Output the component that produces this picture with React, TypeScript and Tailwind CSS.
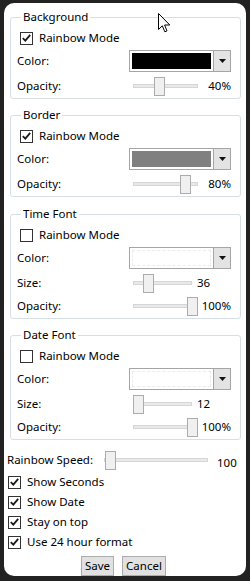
import React from 'react';

type SliderProps = { width: number; thumbLeft: number; className?: string };

const Slider: React.FC<SliderProps> = ({ width, thumbLeft, className = '' }) => (
  <div className={`relative h-[19px] shrink-0 ${className}`} style={{ width }}>
    <div className="absolute left-0 right-0 top-[7px] h-[4px] bg-[#e7eaea] border border-[#d6d6d6]" />
    <div
      className="absolute top-0 w-[11px] h-[19px] bg-[#f0f0f0] border border-[#acacac]"
      style={{ left: thumbLeft }}
    />
  </div>
);

const CheckBox: React.FC<{ checked: boolean; label: string }> = ({ checked, label }) => (
  <div className="flex items-center h-[20px]">
    <div className="w-[13px] h-[13px] border border-[#333333] bg-white flex items-center justify-center shrink-0">
      {checked && (
        <svg width="9" height="8" viewBox="0 0 9 8">
          <path d="M0.8 4.2 L3.3 6.6 L8.2 0.9" fill="none" stroke="#1a1a1a" strokeWidth="1.8" />
        </svg>
      )}
    </div>
    <span className="ml-[6px]">{label}</span>
  </div>
);

const ColorPicker: React.FC<{ color?: string }> = ({ color }) => (
  <div className="flex w-[102px] h-[22px] border border-[#a5a5a5] bg-white">
    <div className="flex-1 p-[2px]">
      <div
        className={`w-full h-full ${color ? '' : 'border border-dashed border-[#ececec]'}`}
        style={color ? { backgroundColor: color } : undefined}
      />
    </div>
    <div className="w-[17px] border-l border-[#a5a5a5] bg-[#e3e3e3] flex items-center justify-center">
      <svg width="7" height="4" viewBox="0 0 7 4">
        <path d="M0 0 L7 0 L3.5 4 Z" fill="#111" />
      </svg>
    </div>
  </div>
);

const Row: React.FC<{ label: string; className?: string; children: React.ReactNode }> = ({ label, className = '', children }) => (
  <div className={`flex items-center ${className}`}>
    <span className="w-[112px] shrink-0">{label}</span>
    {children}
  </div>
);

type GroupProps = {
  title: string;
  rainbow: boolean;
  color?: string;
  size?: { value: string; thumb: number };
  opacity: { value: string; thumb: number };
  className?: string;
};

const Group: React.FC<GroupProps> = ({ title, rainbow, color, size, opacity, className = '' }) => (
  <fieldset className={`mx-[6px] border border-[#d5dfe5] rounded-[3px] pl-[6px] pr-[9px] pt-[3px] pb-[1px] ${className}`}>
    <legend className="ml-[4px] px-[2px] leading-[16px]">{title}</legend>
    <div className="ml-[3px]">
      <CheckBox checked={rainbow} label="Rainbow Mode" />
    </div>
    <Row label="Color:" className="h-[24px] mt-[1px]">
      <ColorPicker color={color} />
    </Row>
    {size && (
      <Row label="Size:" className="h-[22px] mt-[2px]">
        <Slider width={59} thumbLeft={size.thumb} className="ml-[4px]" />
        <span className="ml-[5px]">{size.value}</span>
      </Row>
    )}
    <Row label="Opacity:" className={`h-[22px] ${size ? 'mt-[1px]' : 'mt-[2px]'}`}>
      <Slider width={65} thumbLeft={opacity.thumb} className="ml-[4px]" />
      <span className="ml-auto">{opacity.value}</span>
    </Row>
  </fieldset>
);

const Cursor = () => (
  <svg className="absolute left-[158px] top-[13px]" width="13" height="21" viewBox="0 0 13 21">
    <path d="M0.5 0.5 L0.5 16.5 L4.3 12.8 L6.8 18.8 L9 17.9 L6.6 12 L11.8 12 Z" fill="white" stroke="black" strokeWidth="1" strokeLinejoin="miter" />
  </svg>
);

export default function App() {
  return (
    <div className="relative w-[250px] h-[581px] bg-[#222222] pt-[3px] pl-[4px] overflow-hidden">
      <div
        className="w-[242px] h-[573px] bg-white rounded-[10px] pt-[6px] text-[11.5px] text-black"
        style={{ fontFamily: '"Noto Sans", "Open Sans", sans-serif' }}
      >
        <Group title="Background" rainbow color="#000000" opacity={{ value: '40%', thumb: 21 }} />
        <Group title="Border" rainbow color="#808080" opacity={{ value: '80%', thumb: 47 }} className="mt-[8px]" />
        <Group
          title="Time Font"
          rainbow={false}
          size={{ value: '36', thumb: 10 }}
          opacity={{ value: '100%', thumb: 54 }}
          className="mt-[9px]"
        />
        <Group
          title="Date Font"
          rainbow={false}
          size={{ value: '12', thumb: 0 }}
          opacity={{ value: '100%', thumb: 54 }}
          className="mt-[8px]"
        />
        <div className="flex items-center h-[20px] mt-[10px] pl-[3px]">
          <span className="w-[97px] shrink-0">Rainbow Speed:</span>
          <Slider width={104} thumbLeft={1} />
          <span className="ml-[9px] mt-[5px]">100</span>
        </div>
        <div className="mt-[2px] pl-[4px]">
          <CheckBox checked label="Show Seconds" />
          <CheckBox checked label="Show Date" />
          <CheckBox checked label="Stay on top" />
          <CheckBox checked label="Use 24 hour format" />
        </div>
        <div className="flex gap-[8px] mt-[4px] pl-[77px]">
          <button className="h-[20px] px-[3px] bg-[#e1e1e1] border border-[#adadad] leading-[16px]">Save</button>
          <button className="h-[20px] px-[3px] bg-[#e1e1e1] border border-[#adadad] leading-[16px]">Cancel</button>
        </div>
      </div>
      <Cursor />
    </div>
  );
}
